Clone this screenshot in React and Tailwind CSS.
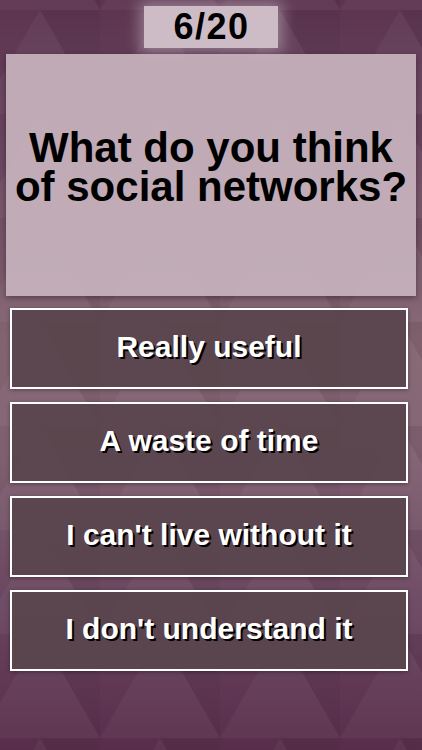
export default function App() {
  const answers = ['Really useful', 'A waste of time', "I can't live without it", "I don't understand it"]

  return (
    <div
      className="relative w-[422px] h-[750px] overflow-hidden bg-[linear-gradient(180deg,#5c3450_0%,#6a4660_20%,#83636f_45%,#806070_60%,#6a4660_80%,#582d4b_100%)]"
      style={{ fontFamily: '"Liberation Sans", Arial, sans-serif' }}
    >
      {/* faint triangle backdrop */}
      <svg className="absolute inset-0 w-full h-full pointer-events-none" viewBox="0 0 422 750">
        <defs>
          <pattern id="tri" width="120" height="104" patternUnits="userSpaceOnUse" x="-20" y="10">
            <path d="M0 104 L60 0 L120 104 Z" fill="#ffffff" opacity="0.04" />
            <path d="M60 0 L120 104 L180 0 Z" fill="#000000" opacity="0.04" />
          </pattern>
        </defs>
        <rect width="422" height="750" fill="url(#tri)" />
      </svg>

      <div className="relative flex flex-col items-center">
        <div className="mt-[6px] w-[134px] h-[42px] bg-[#cdbbc6] shadow-[0_0_14px_4px_rgba(255,255,255,0.35)] flex items-center justify-center">
          <span className="text-[36px] font-bold text-black leading-none tracking-[1.5px] pl-[1px]">6/20</span>
        </div>

        <div className="mt-[6px] w-[410px] h-[242px] bg-[#c4b0bb]/95 shadow-[0_2px_6px_rgba(0,0,0,0.35)] flex flex-col items-center pt-[74px]">
          <p className="text-[42px] font-bold text-black text-center leading-[39px]">
            What do you think
            <br />
            of social networks?
          </p>
        </div>

        <div className="mt-[12px] self-start ml-[10px] w-[398px] flex flex-col gap-[13px]">
          {answers.map((a) => (
            <button
              key={a}
              className="h-[81px] w-full border-2 border-white bg-[#5a444d]/95 shadow-[0_1px_4px_rgba(0,0,0,0.35)] flex items-center justify-center"
            >
              <span className="text-[30px] font-bold text-white leading-none [text-shadow:2px_2px_0_#000] -mt-[3px]">{a}</span>
            </button>
          ))}
        </div>
      </div>
    </div>
  )
}
